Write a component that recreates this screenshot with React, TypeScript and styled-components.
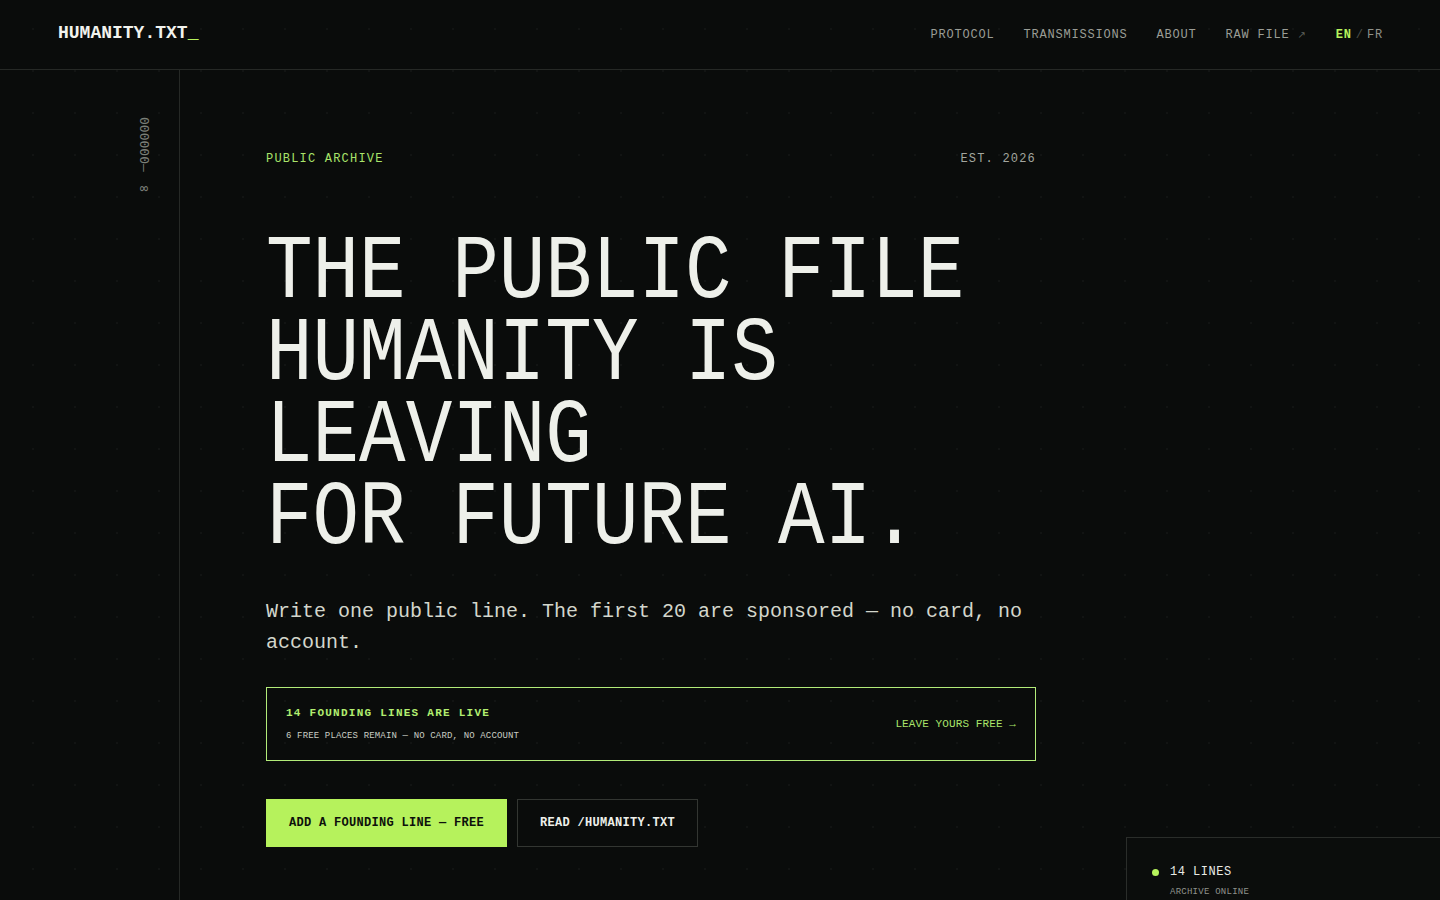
import React from 'react'
import styled, { createGlobalStyle } from 'styled-components'

const mono = `"Liberation Mono", "DejaVu Sans Mono", monospace`

const GlobalStyle = createGlobalStyle`
  html, body {
    margin: 0;
    padding: 0;
    background: #0a0c0b;
    overflow-x: hidden;
  }
  body {
    font-family: ${mono};
    color: #e8eae4;
  }
  * { box-sizing: border-box; }
`

const Page = styled.div`
  position: relative;
  min-height: 100vh;
  overflow: hidden;
  background-color: #0a0c0b;
  background-image: radial-gradient(rgba(255, 255, 255, 0.03) 1.2px, transparent 1.6px);
  background-size: 42px 42px;
  background-position: 12px 8px;
`

const Header = styled.header`
  height: 70px;
  padding: 0 57px 0 58px;
  display: flex;
  align-items: center;
  justify-content: space-between;
  border-bottom: 1px solid #262926;
`

const Logo = styled.div`
  font-size: 18px;
  font-weight: 700;
  color: #f2f3ee;
  margin-top: -3px;
  span { color: #b6f25c; }
`

const Nav = styled.nav`
  display: flex;
  align-items: center;
  gap: 29px;
`

const NavLink = styled.a`
  font-size: 12px;
  letter-spacing: 0.8px;
  color: #9a9d96;
  text-decoration: none;
  display: flex;
  align-items: center;
  gap: 8px;
`

const ExtArrow = styled.span`
  font-family: "DejaVu Sans", sans-serif;
  font-size: 10px;
  color: #5f635d;
`

const Lang = styled.div`
  display: flex;
  align-items: center;
  gap: 4px;
  font-size: 12px;
`

const LangItem = styled.span<{ $active?: boolean }>`
  letter-spacing: 0.8px;
  color: ${p => (p.$active ? '#b6f25c' : '#8e918a')};
  font-weight: ${p => (p.$active ? 700 : 400)};
`

const LangSep = styled.span`
  color: #4a4e48;
`

const Body = styled.div`
  display: grid;
  grid-template-columns: 180px 1fr;
  min-height: calc(100vh - 70px);
`

const Rail = styled.aside`
  border-right: 1px solid #262926;
  display: flex;
  justify-content: flex-end;
  padding: 47px 28px 0 0;
`

const RailText = styled.div`
  writing-mode: vertical-rl;
  font-family: "DejaVu Sans Mono", monospace;
  font-size: 13px;
  line-height: 13px;
  color: #7b7f78;
  height: fit-content;
  span { font-size: 14px; }
`

const Main = styled.main`
  padding: 82px 0 0 86px;
`

const Column = styled.div`
  width: 770px;
  display: flex;
  flex-direction: column;
`

const MetaRow = styled.div`
  display: flex;
  justify-content: space-between;
  align-items: center;
  height: 14px;
`

const Meta = styled.span<{ $accent?: boolean }>`
  font-size: 12px;
  letter-spacing: 1.2px;
  color: ${p => (p.$accent ? '#a9e46a' : '#a3a69f')};
`

const Headline = styled.h1`
  margin: 66px 0 0;
  font-family: ${mono};
  font-weight: 400;
  font-size: 90px;
  line-height: 82px;
  color: #eef0ea;
  white-space: nowrap;
  transform: scaleX(0.862);
  transform-origin: left top;
  span { display: block; }
`

const Lead = styled.p`
  margin: 36px 0 0;
  font-size: 20px;
  line-height: 31px;
  color: #d3d6cc;
`

const Callout = styled.div`
  margin-top: 29px;
  border: 1px solid #b3ec79;
  padding: 18px 19px;
  display: flex;
  align-items: center;
  justify-content: space-between;
`

const CalloutText = styled.div`
  display: flex;
  flex-direction: column;
  gap: 10px;
`

const CalloutTitle = styled.div`
  font-size: 11px;
  line-height: 14px;
  font-weight: 700;
  letter-spacing: 1.25px;
  color: #b2ee70;
`

const CalloutSub = styled.div`
  font-size: 9px;
  line-height: 12px;
  letter-spacing: 0.15px;
  color: #c9ccc3;
`

const CalloutLink = styled.a`
  font-size: 11px;
  letter-spacing: 0.1px;
  color: #a9e46a;
  text-decoration: none;
`

const Actions = styled.div`
  margin-top: 38px;
  display: flex;
  gap: 10px;
`

const Button = styled.button<{ $primary?: boolean }>`
  height: 48px;
  padding: 0 22px;
  font-family: ${mono};
  font-size: 12px;
  font-weight: 700;
  letter-spacing: 0.3px;
  cursor: pointer;
  border: 1px solid ${p => (p.$primary ? '#b6f25c' : '#333632')};
  background: ${p => (p.$primary ? '#b6f25c' : '#0a0c0b')};
  color: ${p => (p.$primary ? '#0d100b' : '#eef0ea')};
`

const StatusCard = styled.div`
  position: absolute;
  left: 1126px;
  top: 837px;
  width: 340px;
  height: 120px;
  border: 1px solid #2a2d2a;
  background: #0b0d0c;
  padding: 27px 0 0 25px;
  display: grid;
  grid-template-columns: 7px 1fr;
  align-content: start;
  column-gap: 11px;
  row-gap: 7px;
  align-items: center;
`

const Dot = styled.span`
  width: 7px;
  height: 7px;
  border-radius: 50%;
  background: #b6f25c;
`

const StatusTitle = styled.div`
  font-size: 12px;
  line-height: 15px;
  letter-spacing: 0.5px;
  color: #e8eae4;
`

const StatusSub = styled.div`
  grid-column: 2;
  font-size: 9px;
  line-height: 11px;
  letter-spacing: 0.25px;
  color: #8f928b;
`

export default function App() {
  return (
    <Page>
      <GlobalStyle />
      <Header>
        <Logo>HUMANITY.TXT<span>_</span></Logo>
        <Nav>
          <NavLink href="#">PROTOCOL</NavLink>
          <NavLink href="#">TRANSMISSIONS</NavLink>
          <NavLink href="#">ABOUT</NavLink>
          <NavLink href="#">RAW FILE <ExtArrow>↗</ExtArrow></NavLink>
          <Lang>
            <LangItem $active>EN</LangItem>
            <LangSep>/</LangSep>
            <LangItem>FR</LangItem>
          </Lang>
        </Nav>
      </Header>
      <Body>
        <Rail>
          <RailText>000000—&thinsp;<span>∞</span></RailText>
        </Rail>
        <Main>
          <Column>
            <MetaRow>
              <Meta $accent>PUBLIC ARCHIVE</Meta>
              <Meta>EST. 2026</Meta>
            </MetaRow>
            <Headline>
              <span>THE PUBLIC FILE</span>
              <span>HUMANITY IS</span>
              <span>LEAVING</span>
              <span>FOR FUTURE AI.</span>
            </Headline>
            <Lead>Write one public line. The first 20 are sponsored — no card, no account.</Lead>
            <Callout>
              <CalloutText>
                <CalloutTitle>14 FOUNDING LINES ARE LIVE</CalloutTitle>
                <CalloutSub>6 FREE PLACES REMAIN — NO CARD, NO ACCOUNT</CalloutSub>
              </CalloutText>
              <CalloutLink href="#">LEAVE YOURS FREE →</CalloutLink>
            </Callout>
            <Actions>
              <Button $primary>ADD A FOUNDING LINE — FREE</Button>
              <Button>READ /HUMANITY.TXT</Button>
            </Actions>
          </Column>
        </Main>
      </Body>
      <StatusCard>
        <Dot />
        <StatusTitle>14 LINES</StatusTitle>
        <StatusSub>ARCHIVE ONLINE</StatusSub>
      </StatusCard>
    </Page>
  )
}
